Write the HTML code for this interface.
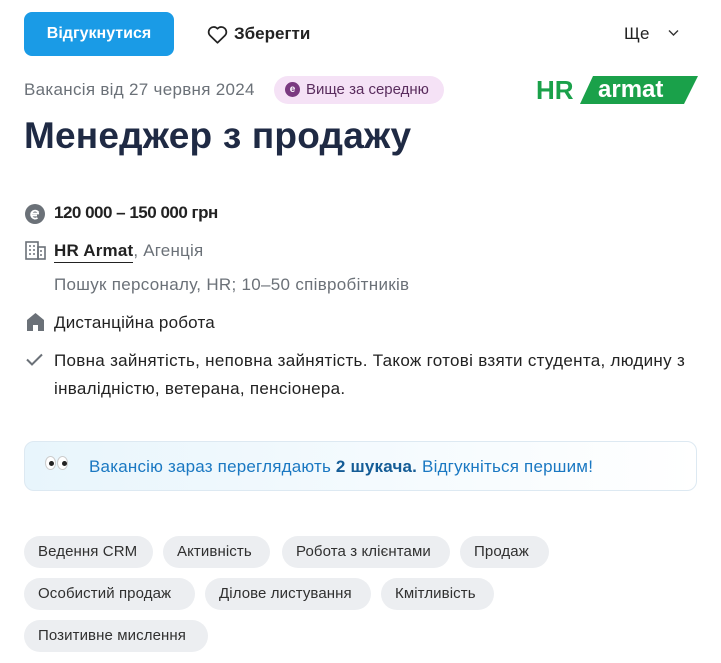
<!DOCTYPE html>
<html><head><meta charset="utf-8"><style>
*{box-sizing:border-box;margin:0;padding:0}
body{width:721px;height:663px;background:#fff;font-family:"Liberation Sans",sans-serif;color:#303030;position:relative;overflow:hidden;font-size:16px;letter-spacing:0}
.a{position:absolute;white-space:nowrap}
.btn{left:24px;top:12px;width:150px;height:44px;background:#1a9be6;border-radius:8px;color:#fff;font-weight:bold;font-size:16px;display:flex;align-items:center;justify-content:center}
.gray{color:#6b7178}
.tag{position:absolute;height:32px;border-radius:16px;background:#eceef1;font-size:15px;line-height:32px;padding:0 14px;color:#303030;letter-spacing:0.1px}
</style></head><body>
<div class="a btn">Відгукнутися</div>
<div class="a" style="left:207px;top:24px;font-size:17px;font-weight:bold;color:#222;display:flex;align-items:center;gap:6px">
<svg width="21" height="19" viewBox="0 0 24 22"><path d="M12 20.5 3.2 12A5.3 5.3 0 0 1 12 4.3 5.3 5.3 0 0 1 20.8 12Z" fill="none" stroke="#222" stroke-width="2" stroke-linejoin="round"/></svg>Зберегти</div>
<div class="a" style="left:624px;top:24px;font-size:17px;color:#222">Ще</div>
<svg class="a" style="left:668px;top:29px" width="11" height="8" viewBox="0 0 11 8"><path d="M1 1.5 5.5 6 10 1.5" fill="none" stroke="#333" stroke-width="1.4"/></svg>
<div class="a gray" style="left:24px;top:80px;font-size:17px;letter-spacing:0.3px">Вакансія від 27 червня 2024</div>
<div class="a" style="left:274px;top:76px;width:170px;height:28px;border-radius:14px;background:#f5e2f6;color:#5a2d5e;font-size:15px;line-height:28px;padding-left:32px">Вище за середню</div>
<div class="a" style="left:285px;top:82px;width:15px;height:15px;border-radius:50%;background:#7a3a80;color:#fff;font-size:10px;line-height:15px;text-align:center;font-weight:bold">е</div>
<div class="a" style="left:536px;top:75px;font-size:26px;font-weight:bold;color:#1aa14a">HR</div>
<svg class="a" style="left:580px;top:76px" width="118" height="28" viewBox="0 0 118 28"><path d="M13 0H118L104 28H0Z" fill="#1aa14a"/></svg>
<div class="a" style="left:598px;top:76px;font-size:24px;font-weight:bold;color:#fff">armat</div>
<div class="a" style="left:24px;top:115px;font-size:37px;font-weight:bold;color:#1f2a44;letter-spacing:0.2px">Менеджер з продажу</div>
<svg class="a" style="left:25px;top:204px" width="20" height="20" viewBox="0 0 20 20"><circle cx="10" cy="10" r="10" fill="#6b7178"/><path d="M13.5 8.5A4 4 0 1 0 12.5 13.8M6 9.5h8M6 11.5h6" stroke="#fff" stroke-width="1.8" fill="none"/></svg>
<div class="a" style="left:54px;top:203px;font-size:17px;font-weight:bold;color:#222;letter-spacing:-0.5px">120 000 – 150 000 грн</div>
<svg class="a" style="left:25px;top:241px" width="21" height="19" viewBox="0 0 21 19"><rect x="1" y="1" width="12" height="17" fill="none" stroke="#6b7178" stroke-width="1.6"/><rect x="13" y="6" width="7" height="12" fill="none" stroke="#6b7178" stroke-width="1.6"/><path d="M4 5h2M8 5h2M4 9h2M8 9h2M4 13h2M8 13h2M15 10h2M15 14h2" stroke="#6b7178" stroke-width="1.6"/></svg>
<div class="a" style="left:54px;top:241px;font-size:17px;letter-spacing:0.2px"><span style="font-weight:bold;color:#222;border-bottom:1.5px solid #222;padding-bottom:2px">HR Armat</span><span class="gray">, Агенція</span></div>
<div class="a gray" style="left:54px;top:275px;font-size:17px;letter-spacing:0.3px">Пошук персоналу, HR; 10–50 співробітників</div>
<svg class="a" style="left:27px;top:313px" width="17" height="18" viewBox="0 0 17 18"><path d="M0 7 8.5 0 17 7V18H11V12H6V18H0Z" fill="#6b7178"/></svg>
<div class="a" style="left:54px;top:313px;font-size:17px;color:#222;letter-spacing:0.2px">Дистанційна робота</div>
<svg class="a" style="left:26px;top:353px" width="17" height="13" viewBox="0 0 17 13"><path d="M1 6.5 6 11.5 16 1.5" fill="none" stroke="#6b7178" stroke-width="2"/></svg>
<div class="a" style="left:54px;top:347px;font-size:17px;color:#222;line-height:28px;white-space:normal;width:650px;letter-spacing:0.3px">Повна зайнятість, неповна зайнятість. Також готові взяти студента, людину з інвалідністю, ветерана, пенсіонера.</div>
<div class="a" style="left:24px;top:441px;width:673px;height:50px;border:1px solid #dde9f2;border-radius:10px;background:linear-gradient(90deg,#e8f5fc,#fff)"></div>
<div class="a" style="left:45px;top:456px;font-size:16px">
<span style="display:inline-block;width:11px;height:14px;border-radius:50%;background:#fff;border:1px solid #ccc;position:relative"><i style="position:absolute;left:3px;top:4px;width:5px;height:5px;border-radius:50%;background:#222"></i></span><span style="display:inline-block;width:11px;height:14px;border-radius:50%;background:#fff;border:1px solid #ccc;position:relative;margin-left:1px"><i style="position:absolute;left:4px;top:4px;width:5px;height:5px;border-radius:50%;background:#222"></i></span></div>
<div class="a" style="left:89px;top:457px;font-size:17px;color:#1a78c2;letter-spacing:0.2px">Вакансію зараз переглядають <b style="color:#145c96">2 шукача.</b> Відгукніться першим!</div>
<div class="tag" style="left:24px;top:536px;width:129px">Ведення CRM</div>
<div class="tag" style="left:163px;top:536px;width:107px">Активність</div>
<div class="tag" style="left:282px;top:536px;width:168px">Робота з клієнтами</div>
<div class="tag" style="left:460px;top:536px;width:89px">Продаж</div>
<div class="tag" style="left:24px;top:578px;width:171px">Особистий продаж</div>
<div class="tag" style="left:205px;top:578px;width:166px">Ділове листування</div>
<div class="tag" style="left:381px;top:578px;width:113px">Кмітливість</div>
<div class="tag" style="left:24px;top:620px;width:184px">Позитивне мислення</div>
</body></html>
